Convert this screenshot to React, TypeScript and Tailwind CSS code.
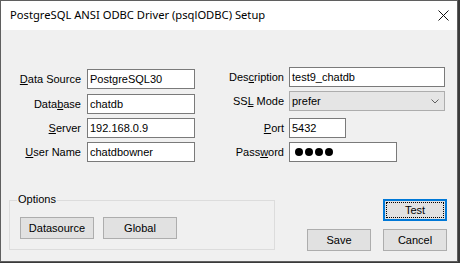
import type { ReactNode } from "react";

const ui = "font-['Liberation_Sans',Arial,sans-serif] text-[11px] text-black";

function U({ children }: { children: ReactNode }) {
  return <span className="underline underline-offset-[1px]">{children}</span>;
}

function Row({
  label,
  labelW,
  gap,
  className,
  children,
}: {
  label: ReactNode;
  labelW: string;
  gap: string;
  className?: string;
  children: ReactNode;
}) {
  return (
    <div className={`flex h-[20px] items-center ${gap} ${className ?? ""}`}>
      <div className={`${labelW} text-right leading-none`}>{label}</div>
      {children}
    </div>
  );
}

function TextBox({ w, value }: { w: string; value: string }) {
  return (
    <div className={`${w} flex h-full items-center border border-[#7a7a7a] bg-white px-[2px] leading-none`}>
      {value}
    </div>
  );
}

function Button({ w, children }: { w: string; children: ReactNode }) {
  return (
    <div className={`${w} flex h-[22px] items-center justify-center border border-[#adadad] bg-[#e1e1e1] leading-none`}>
      {children}
    </div>
  );
}

export default function App() {
  return (
    <div className="h-[263px] w-[460px] bg-[#3a3a3a]">
      <div className={`flex h-[262px] w-[458px] flex-col border border-[#5f5f5f] bg-[#f0f0f0] ${ui}`}>
        {/* Title bar */}
        <div className="flex h-[29px] items-center justify-between bg-white">
          <span className="pl-[9px] font-['Noto_Sans',sans-serif] text-[11.2px] text-black">
            PostgreSQL ANSI ODBC Driver (psqlODBC) Setup
          </span>
          <svg className="mr-[8px] h-[11px] w-[11px]" viewBox="0 0 11 11">
            <path d="M0.5 0.5L10.5 10.5M10.5 0.5L0.5 10.5" stroke="#111" strokeWidth="1" />
          </svg>
        </div>

        {/* Fields */}
        <div className="flex gap-[5px]">
          <div className="mt-[39px] flex flex-col">
            <Row label={<><U>D</U>ata Source</>} labelW="w-[80px]" gap="gap-[6px]">
              <TextBox w="w-[108px]" value="PostgreSQL30" />
            </Row>
            <Row label={<>Data<U>b</U>ase</>} labelW="w-[80px]" gap="gap-[6px]" className="mt-[5px]">
              <TextBox w="w-[108px]" value="chatdb" />
            </Row>
            <Row label={<><U>S</U>erver</>} labelW="w-[80px]" gap="gap-[6px]" className="mt-[4px]">
              <TextBox w="w-[108px]" value="192.168.0.9" />
            </Row>
            <Row label={<><U>U</U>ser Name</>} labelW="w-[80px]" gap="gap-[6px]" className="mt-[4px]">
              <TextBox w="w-[108px]" value="chatdbowner" />
            </Row>
          </div>

          <div className="mt-[37px] flex flex-col">
            <Row label={<>Des<U>c</U>ription</>} labelW="w-[84px]" gap="gap-[5px]">
              <TextBox w="w-[156px]" value="test9_chatdb" />
            </Row>
            <Row label={<>SS<U>L</U> Mode</>} labelW="w-[84px]" gap="gap-[5px]" className="mt-[4px]">
              <div className="flex h-full w-[156px] items-center justify-between border border-[#adadad] bg-[#e5e5e5] pl-[2px] pr-[5px] leading-none">
                <span>prefer</span>
                <svg className="h-[5px] w-[8px]" viewBox="0 0 8 5">
                  <path d="M0.5 0.5L4 4L7.5 0.5" fill="none" stroke="#606060" strokeWidth="1" />
                </svg>
              </div>
            </Row>
            <Row label={<><U>P</U>ort</>} labelW="w-[84px]" gap="gap-[5px]" className="mt-[7px]">
              <TextBox w="w-[57px]" value="5432" />
            </Row>
            <Row label={<>Pass<U>w</U>ord</>} labelW="w-[84px]" gap="gap-[5px]" className="mt-[4px]">
              <div className="flex h-full w-[108px] items-center gap-[2px] border border-[#7a7a7a] bg-white pl-[5px]">
                <span className="h-[8px] w-[8px] rounded-full bg-black" />
                <span className="h-[8px] w-[8px] rounded-full bg-black" />
                <span className="h-[8px] w-[8px] rounded-full bg-black" />
                <span className="h-[8px] w-[8px] rounded-full bg-black" />
              </div>
            </Row>
          </div>
        </div>

        {/* Bottom */}
        <div className="mt-[37px] flex items-start">
          <div className="relative ml-[8px] mt-[1px] flex h-[50px] w-[266px] gap-[9px] border border-[#dcdcdc] pl-[10px] pt-[16px]">
            <span className="absolute -top-[7px] left-[7px] bg-[#f0f0f0] px-[1px] leading-none">Options</span>
            <Button w="w-[74px]">Datasource</Button>
            <Button w="w-[74px]">Global</Button>
          </div>

          <div className="ml-auto flex flex-col items-end pr-[10px]">
            <div className="flex h-[22px] w-[64px] border-2 border-[#0078d7] bg-[#e1e1e1]">
              <div className="m-[1px] flex flex-1 items-center justify-center border border-dotted border-black leading-none">
                Test
              </div>
            </div>
            <div className="mt-[8px] flex gap-[12px]">
              <Button w="w-[64px]">Save</Button>
              <Button w="w-[64px]">Cancel</Button>
            </div>
          </div>
        </div>
      </div>
    </div>
  );
}
